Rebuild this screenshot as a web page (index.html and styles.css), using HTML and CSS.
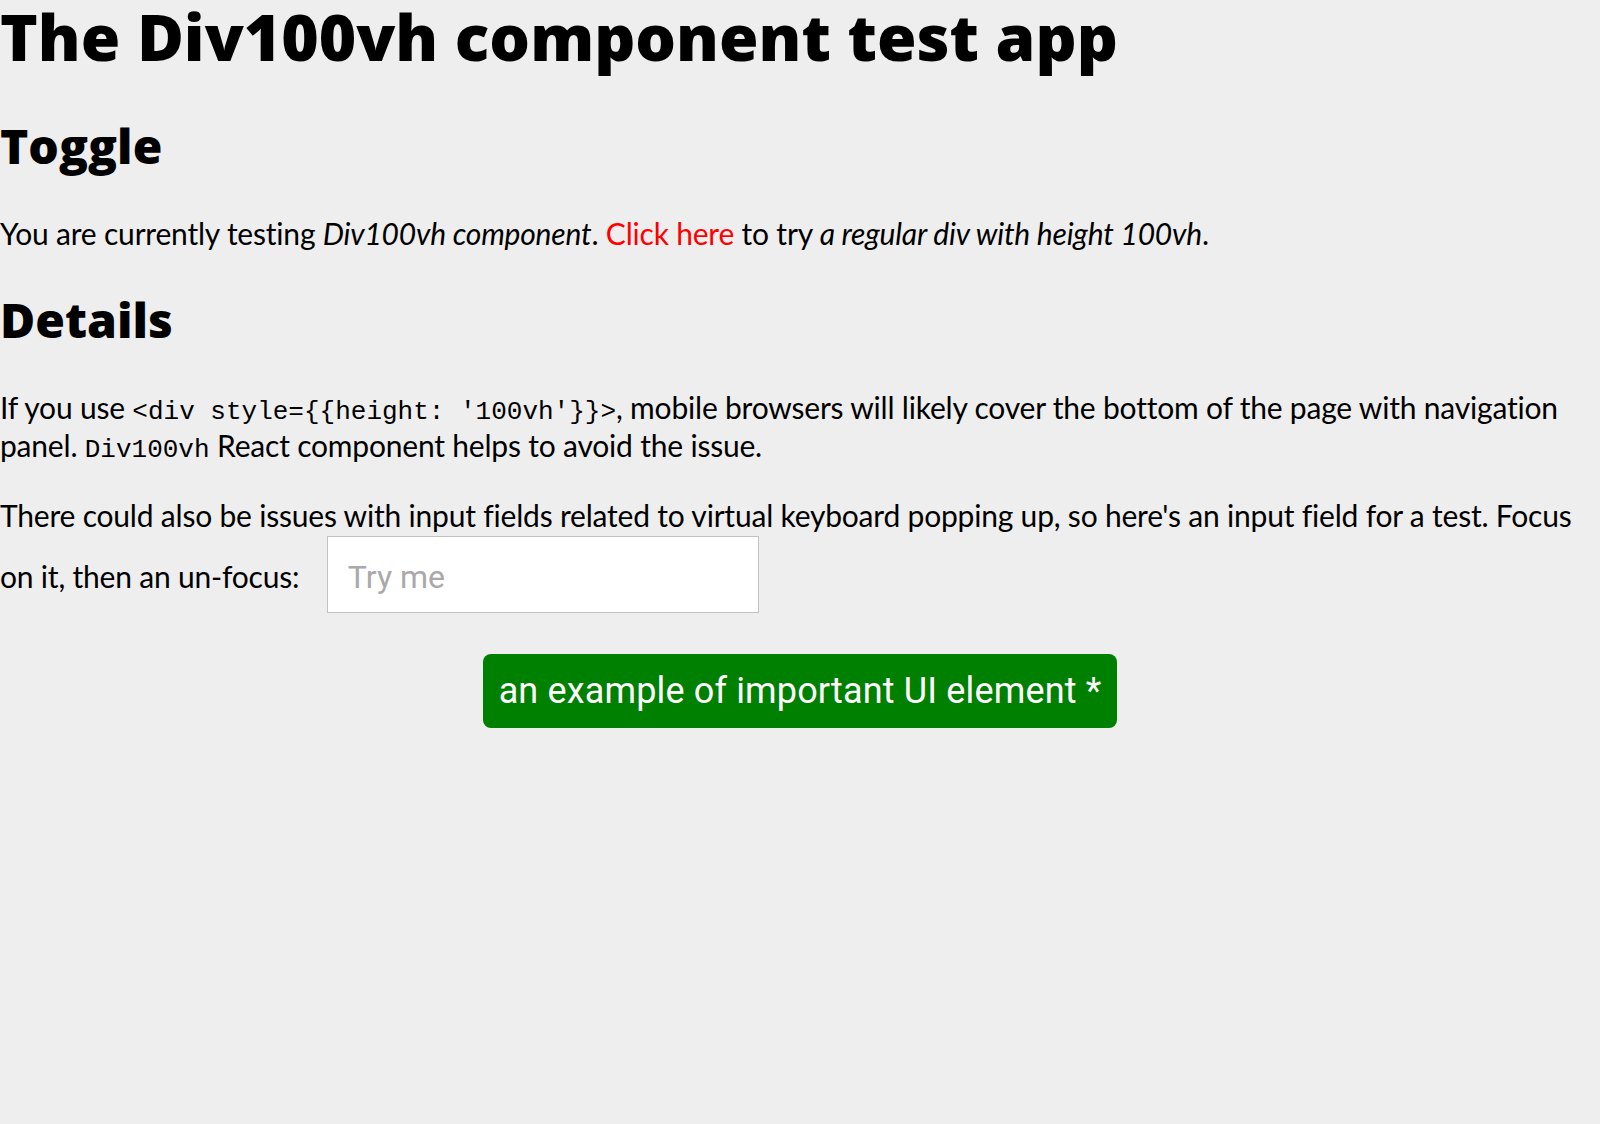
FILE: index.html
```html
<!DOCTYPE html>
<html lang="en">
<head>
<meta charset="utf-8">
<title>Div100vh test app</title>
<link rel="stylesheet" href="styles.css">
</head>
<body>
<div class="app">
  <h1 class="title">The Div100vh component test app</h1>
  <h2 class="section">Toggle</h2>
  <p class="text">You are currently testing <em>Div100vh component</em>. <a class="link" href="#">Click here</a> to try <em>a regular div with height 100vh</em>.</p>
  <h2 class="section">Details</h2>
  <p class="text">If you use <code class="code">&lt;div style={{height: '100vh'}}&gt;</code>, mobile browsers will likely cover the bottom of the page with navigation panel. <code class="code">Div100vh</code> React component helps to avoid the issue.</p>
  <p class="text">There could also be issues with input fields related to virtual keyboard popping up, so here's an input field for a test. Focus on it, then an un-focus: <input class="field" type="text" placeholder="Try me"></p>
  <div class="actions">
    <button class="important" type="button">an example of important UI element *</button>
  </div>
</div>
</body>
</html>
```
FILE: styles.css
```css
html, body {
  margin: 0;
  padding: 0;
  background: #eeeeee;
}
body {
  font-family: Lato, "Open Sans", sans-serif;
  font-size: 30px;
  letter-spacing: -0.2px;
  color: #000;
}
.app {
  display: flow-root;
}
.title {
  font-family: "Open Sans", Lato, sans-serif;
  font-size: 64px;
  font-weight: 800;
  letter-spacing: 0;
  line-height: 74px;
  margin: 0 0 44px;
}
.section {
  font-family: "Open Sans", Lato, sans-serif;
  font-size: 48px;
  font-weight: 800;
  letter-spacing: 0;
  line-height: 56px;
  margin: 40px 0;
}
.text {
  line-height: 38px;
  margin: 32px 0;
}
.section + .text {
  margin-top: 40px;
}
.text em {
  font-style: italic;
}
.link {
  color: #ff0000;
  text-decoration: none;
}
.code {
  font-family: "Liberation Mono", monospace;
  font-size: 26px;
  letter-spacing: 0;
  line-height: 1;
}
.field {
  box-sizing: border-box;
  width: 432px;
  height: 77px;
  margin: 2px 0 0 20px;
  padding: 21px 20px 16px;
  border: 1px solid #c2c2c2;
  border-radius: 0;
  background: #fff;
  font-family: Roboto, sans-serif;
  font-size: 32px;
  letter-spacing: 0;
  line-height: 38px;
  color: #000;
  vertical-align: baseline;
}
.field::placeholder {
  color: #a9a9a9;
}
.actions {
  display: flex;
  justify-content: center;
  margin-top: 41px;
}
.important {
  background: #008000;
  color: #fff;
  border: 0;
  border-radius: 8px;
  padding: 16px 16px;
  font-family: Roboto, sans-serif;
  font-size: 36px;
  letter-spacing: 0.15px;
  line-height: 42px;
}
```
